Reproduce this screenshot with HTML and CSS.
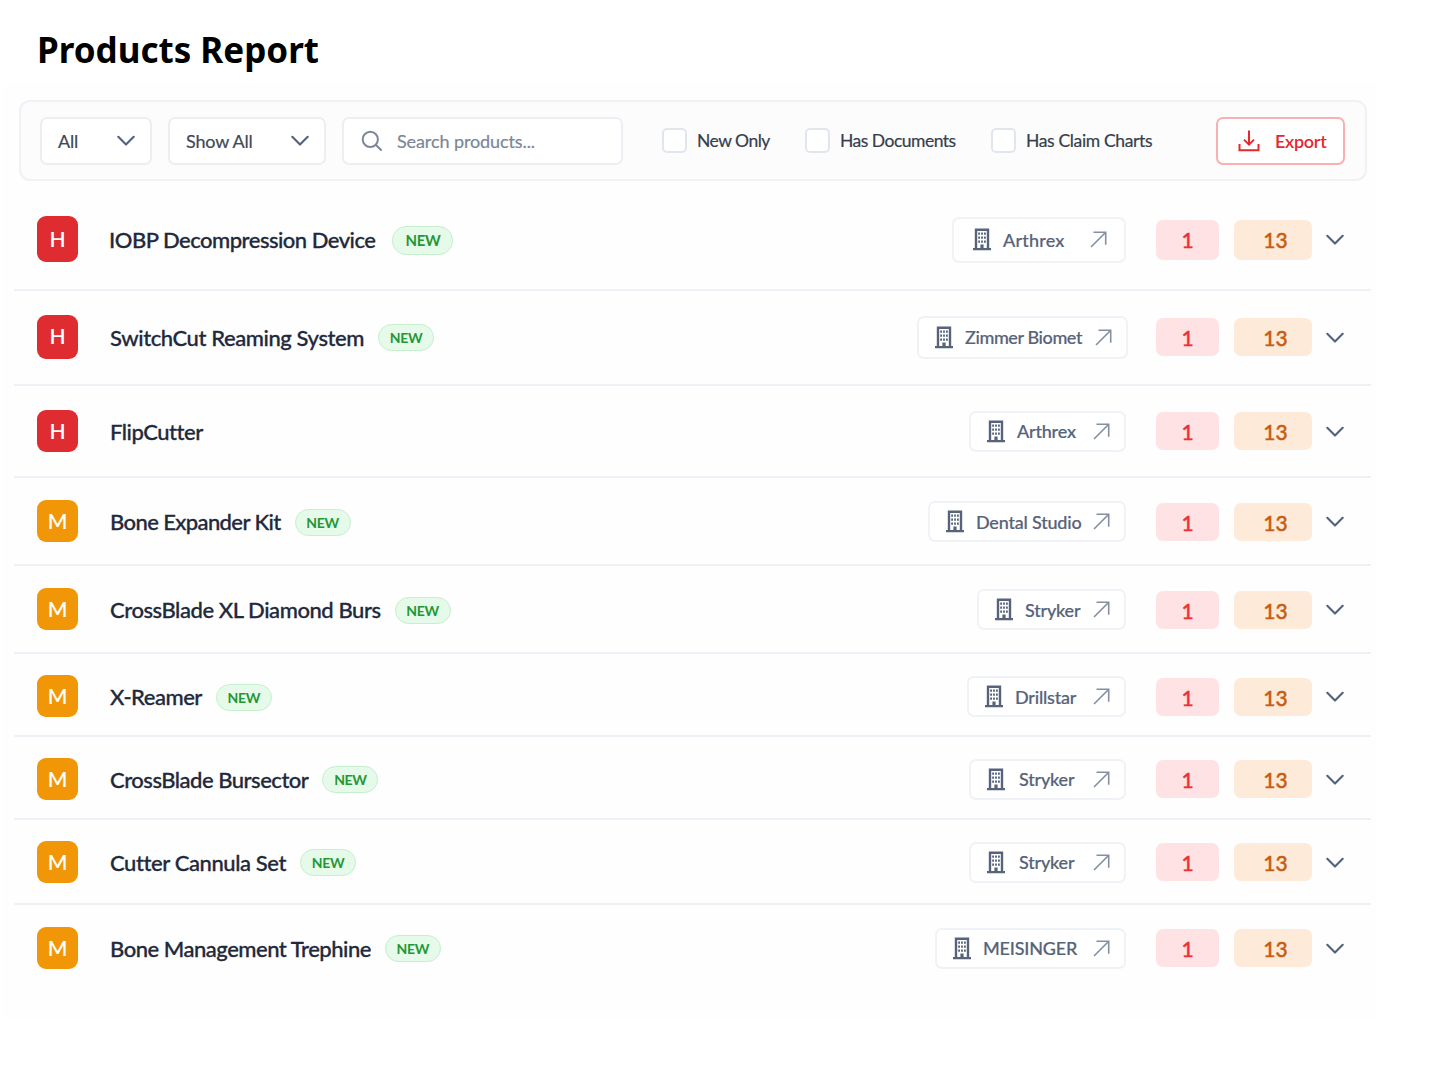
FILE: index.html
```html
<!DOCTYPE html>
<html lang="en">
<head>
  <meta charset="UTF-8">
  <title>Products Report</title>
  <link rel="stylesheet" href="styles.css">
</head>
<body>

  <svg class="sprite" width="0" height="0">
    <symbol id="chevron" viewBox="0 0 18 12">
      <path d="M1.3 1.8 9 9.6l7.7-7.8" fill="none" stroke="currentColor" stroke-width="2.1" stroke-linecap="round" stroke-linejoin="round" />
    </symbol>
    <symbol id="building" viewBox="0 0 18 23">
      <path d="M3 21V1.7h12V21" fill="none" stroke="currentColor" stroke-width="2.4" />
      <path d="M0 20h7.4v-3.6h3.2V20H18v2.2H0z" fill="currentColor" />
      <path d="M6.1 4.6v10.6M9 4.6v10.6M11.9 4.6v10.6" fill="none" stroke="currentColor" stroke-width="1.8" stroke-dasharray="2.1 1.9" />
    </symbol>
    <symbol id="arrow" viewBox="0 0 17 17">
      <path d="M1 16 15.5 1.5M3.5 1.3h12.2v12.4" fill="none" stroke="currentColor" stroke-width="1.6" />
    </symbol>
  </svg>

  <h1>Products Report</h1>

  <main>
    <div class="filters">
      <button class="select type">All <svg class="chevron"><use href="#chevron" /></svg></button>
      <button class="select show">Show All <svg class="chevron"><use href="#chevron" /></svg></button>
      <div class="search">
        <svg width="22" height="22" viewBox="0 0 22 22" fill="none" stroke="currentColor" stroke-width="2" stroke-linecap="round">
          <circle cx="9.3" cy="9.3" r="7.6" />
          <path d="m15 15 5 5" />
        </svg>
        <span>Search products...</span>
      </div>
      <label class="check new-only"><span class="box"></span><span>New Only</span></label>
      <label class="check documents"><span class="box"></span><span>Has Documents</span></label>
      <label class="check charts"><span class="box"></span><span>Has Claim Charts</span></label>
      <button class="export">
        <svg width="22" height="22" viewBox="0 0 22 22" fill="none" stroke="currentColor" stroke-width="2">
          <path d="M11 .5v13.5M6 9.6l5 5 5-5M1.5 14v6.2h19V14" />
        </svg>
        <span>Export</span>
      </button>
    </div>

    <div class="products">
      <div class="row">
        <span class="level high">H</span>
        <span class="name">IOBP Decompression Device</span>
        <span class="new">NEW</span>
        <a class="company"><svg class="building"><use href="#building" /></svg><span>Arthrex</span><svg class="arrow"><use href="#arrow" /></svg></a>
        <span class="count red">1</span>
        <span class="count orange">13</span>
        <svg class="chevron"><use href="#chevron" /></svg>
      </div>
      <div class="row">
        <span class="level high">H</span>
        <span class="name">SwitchCut Reaming System</span>
        <span class="new">NEW</span>
        <a class="company"><svg class="building"><use href="#building" /></svg><span>Zimmer Biomet</span><svg class="arrow"><use href="#arrow" /></svg></a>
        <span class="count red">1</span>
        <span class="count orange">13</span>
        <svg class="chevron"><use href="#chevron" /></svg>
      </div>
      <div class="row">
        <span class="level high">H</span>
        <span class="name">FlipCutter</span>
        <a class="company"><svg class="building"><use href="#building" /></svg><span>Arthrex</span><svg class="arrow"><use href="#arrow" /></svg></a>
        <span class="count red">1</span>
        <span class="count orange">13</span>
        <svg class="chevron"><use href="#chevron" /></svg>
      </div>
      <div class="row">
        <span class="level medium">M</span>
        <span class="name">Bone Expander Kit</span>
        <span class="new">NEW</span>
        <a class="company"><svg class="building"><use href="#building" /></svg><span>Dental Studio</span><svg class="arrow"><use href="#arrow" /></svg></a>
        <span class="count red">1</span>
        <span class="count orange">13</span>
        <svg class="chevron"><use href="#chevron" /></svg>
      </div>
      <div class="row">
        <span class="level medium">M</span>
        <span class="name">CrossBlade XL Diamond Burs</span>
        <span class="new">NEW</span>
        <a class="company"><svg class="building"><use href="#building" /></svg><span>Stryker</span><svg class="arrow"><use href="#arrow" /></svg></a>
        <span class="count red">1</span>
        <span class="count orange">13</span>
        <svg class="chevron"><use href="#chevron" /></svg>
      </div>
      <div class="row">
        <span class="level medium">M</span>
        <span class="name">X-Reamer</span>
        <span class="new">NEW</span>
        <a class="company"><svg class="building"><use href="#building" /></svg><span>Drillstar</span><svg class="arrow"><use href="#arrow" /></svg></a>
        <span class="count red">1</span>
        <span class="count orange">13</span>
        <svg class="chevron"><use href="#chevron" /></svg>
      </div>
      <div class="row">
        <span class="level medium">M</span>
        <span class="name">CrossBlade Bursector</span>
        <span class="new">NEW</span>
        <a class="company"><svg class="building"><use href="#building" /></svg><span>Stryker</span><svg class="arrow"><use href="#arrow" /></svg></a>
        <span class="count red">1</span>
        <span class="count orange">13</span>
        <svg class="chevron"><use href="#chevron" /></svg>
      </div>
      <div class="row">
        <span class="level medium">M</span>
        <span class="name">Cutter Cannula Set</span>
        <span class="new">NEW</span>
        <a class="company"><svg class="building"><use href="#building" /></svg><span>Stryker</span><svg class="arrow"><use href="#arrow" /></svg></a>
        <span class="count red">1</span>
        <span class="count orange">13</span>
        <svg class="chevron"><use href="#chevron" /></svg>
      </div>
      <div class="row">
        <span class="level medium">M</span>
        <span class="name">Bone Management Trephine</span>
        <span class="new">NEW</span>
        <a class="company"><svg class="building"><use href="#building" /></svg><span>MEISINGER</span><svg class="arrow"><use href="#arrow" /></svg></a>
        <span class="count red">1</span>
        <span class="count orange">13</span>
        <svg class="chevron"><use href="#chevron" /></svg>
      </div>
    </div>
  </main>

</body>
</html>
```
FILE: styles.css
```css
* {
  box-sizing: border-box;
}
body {
  font-family: Lato, sans-serif;
  margin: 0;
  background: #fff;
  color: #1e293b;
}
.sprite {
  display: block;
}
h1 {
  font-family: "Noto Sans", sans-serif;
  font-size: 35px;
  font-weight: 700;
  line-height: 48px;
  color: #000;
  margin: 0;
  padding: 26px 0 8px 37px;
}
main {
  width: 1374px;
  height: 936px;
  margin-left: 2px;
  padding-top: 18px;
  background: #fefefe;
}
button {
  font-family: inherit;
  background: #fff;
}
svg {
  flex: none;
}
.chevron {
  width: 18px;
  height: 12px;
  color: #52627c;
}

/* filter bar */
.filters {
  display: flex;
  align-items: center;
  width: 1348px;
  height: 81px;
  margin-left: 17px;
  padding: 0 20px 0 19px;
  background: #fcfcfd;
  border: 2px solid #eef1f6;
  border-radius: 11px;
}
.select, .search {
  display: flex;
  align-items: center;
  height: 48px;
  border: 2px solid #ebeff4;
  border-radius: 7px;
  background: #fff;
  font-size: 18px;
}
.select {
  justify-content: space-between;
  padding: 0 15px 0 16px;
  color: #404956;
  letter-spacing: -0.2px;
  -webkit-text-stroke: 0.2px;
}
.type {
  width: 112px;
  margin-right: 16px;
}
.show {
  width: 158px;
  margin-right: 16px;
}
.search {
  width: 281px;
  padding-left: 17px;
  gap: 14px;
  color: #7b8698;
  letter-spacing: -0.1px;
  -webkit-text-stroke: 0.2px;
}
.check {
  display: flex;
  align-items: center;
  gap: 10px;
  font-size: 17.5px;
  letter-spacing: -0.5px;
  color: #353e4b;
  white-space: nowrap;
  -webkit-text-stroke: 0.2px;
}
.charts {
  letter-spacing: -0.35px;
}
.box {
  width: 25px;
  height: 25px;
  border: 2px solid #e1e6ee;
  border-radius: 5px;
  background: #fff;
}
.new-only {
  margin-left: 39px;
  width: 143px;
}
.documents {
  width: 186px;
}
.export {
  display: flex;
  align-items: center;
  gap: 15px;
  width: 129px;
  height: 48px;
  margin-left: auto;
  padding: 0 0 0 20px;
  border: 2px solid #f9b0b3;
  border-radius: 7px;
  color: #e5282d;
  font-size: 18px;
  font-weight: 600;
  letter-spacing: -0.3px;
}

/* product rows */
.products {
  width: 1357px;
  margin: 8px 0 0 12px;
}
.row {
  display: flex;
  align-items: center;
  height: 88px;
  padding: 0 27px 0 23px;
  border-bottom: 2px solid #eff1f6;
}
.row .chevron {
  margin-top: 2px;
}
.level {
  width: 41px;
  height: 42px;
  line-height: 41px;
  border-radius: 9px;
  color: #fff;
  font-size: 21px;
  font-weight: 600;
  text-align: center;
}
.high {
  background: #de2c30;
}
.medium {
  background: #f19707;
}
.name {
  margin-left: 32px;
  padding-top: 1px;
  font-size: 22px;
  font-weight: 500;
  letter-spacing: -0.48px;
  white-space: nowrap;
  -webkit-text-stroke: 0.3px;
}
.new {
  width: 56px;
  height: 27px;
  margin: 2px 0 0 14px;
  line-height: 25px;
  border: 1px solid #c5efcd;
  border-radius: 14px;
  background: #e6fae9;
  color: #249735;
  font-size: 14px;
  font-weight: 700;
  letter-spacing: -0.3px;
  text-align: center;
}
.company {
  display: flex;
  align-items: center;
  width: 157px;
  height: 41px;
  margin: 1px 30px 0 auto;
  padding: 0 14px 0 16px;
  border: 2px solid #eff2f6;
  border-radius: 7px;
  background: #fff;
  color: #56637a;
  font-size: 18px;
  font-weight: 500;
  letter-spacing: -0.2px;
  -webkit-text-stroke: 0.2px;
}
.building {
  width: 18px;
  height: 23px;
  margin-right: 12px;
}
.arrow {
  width: 17px;
  height: 17px;
  margin-left: auto;
  color: #8490a2;
}
.count {
  height: 38px;
  margin-top: 1px;
  line-height: 39px;
  border-radius: 7px;
  font-size: 21px;
  font-weight: 500;
  text-align: center;
  -webkit-text-stroke: 0.4px;
}
.red {
  width: 63px;
  background: #fee2e4;
  color: #ee3036;
}
.orange {
  width: 78px;
  margin-left: 15px;
  margin-right: 14px;
  padding-left: 5px;
  background: #fdead9;
  color: #c75d12;
}

.row:nth-child(1) {
  height: 102px;
}
.row:nth-child(1) .level {
  height: 46px;
  line-height: 45px;
}
.row:nth-child(1) .name {
  margin-left: 31px;
  letter-spacing: -0.5px;
}
.row:nth-child(1) .new {
  width: 61px;
  height: 29px;
  margin-left: 17px;
  line-height: 27px;
  font-size: 15px;
}
.row:nth-child(1) .company {
  width: 174px;
  height: 46px;
  padding-left: 19px;
  padding-right: 17px;
  letter-spacing: 0.2px;
}
.row:nth-child(1) .count {
  height: 40px;
}
.row:nth-child(2) {
  height: 95px;
  padding-bottom: 2px;
}
.row:nth-child(2) .level {
  height: 44px;
}
.row:nth-child(2) .name {
  letter-spacing: -0.4px;
}
.row:nth-child(2) .company {
  width: 211px;
  height: 43px;
  margin-right: 28px;
  letter-spacing: -0.4px;
}
.row:nth-child(3) {
  height: 92px;
  padding-bottom: 1px;
}
.row:nth-child(4) .name {
  letter-spacing: -0.6px;
}
.row:nth-child(4) .company {
  width: 198px;
}
.row:nth-child(5) .name {
  letter-spacing: -0.43px;
}
.row:nth-child(5) .company {
  width: 149px;
}
.row:nth-child(6) {
  height: 83px;
  padding-top: 3px;
}
.row:nth-child(6) .company {
  width: 159px;
}
.row:nth-child(7) {
  height: 83px;
  padding-top: 2px;
}
.row:nth-child(7) .company, .row:nth-child(8) .company {
  padding-left: 16px;
}
.row:nth-child(7) .building, .row:nth-child(8) .building {
  margin-right: 14px;
}
.row:nth-child(8) {
  height: 85px;
}
.row:nth-child(8) .name {
  letter-spacing: -0.4px;
}
.row:nth-child(9) {
  padding-bottom: 3px;
  border: none;
}
.row:nth-child(9) .company {
  width: 191px;
}
```
